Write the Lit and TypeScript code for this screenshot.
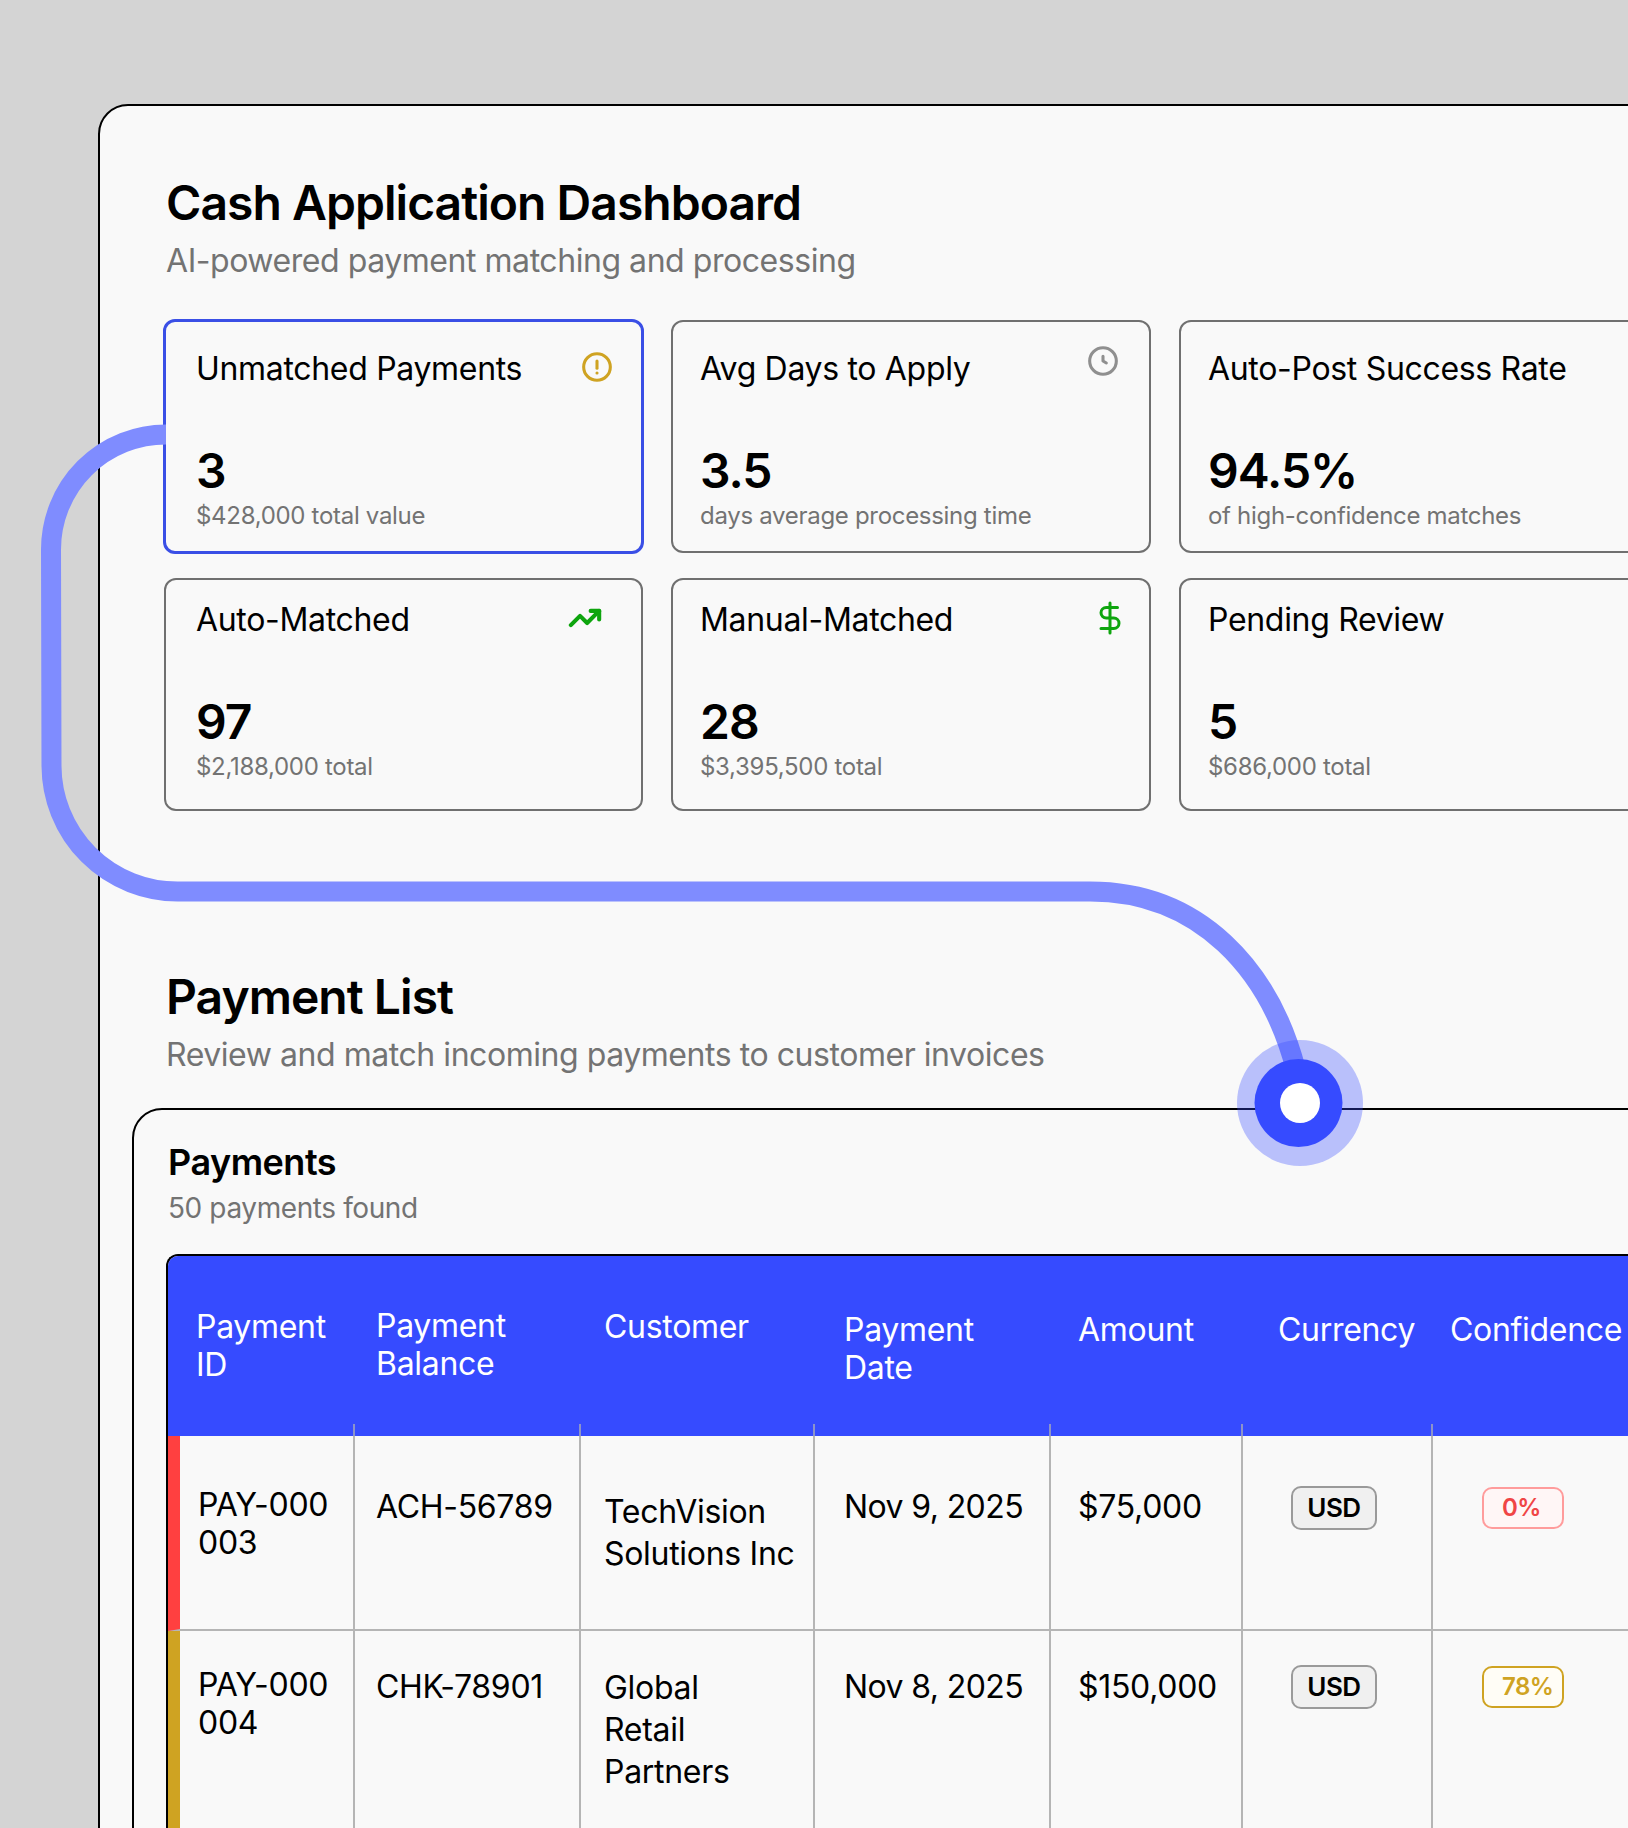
import { LitElement, html, css, svg } from "lit";
import { customElement } from "lit/decorators.js";

const icons = {
  alert: svg`<circle cx="12" cy="12" r="10"/><path d="M12 7.5v5.5"/><path d="M12 16.5h.01"/>`,
  clock: svg`<circle cx="12" cy="12" r="10"/><path d="M12 8.5V12l2.5 1.5"/>`,
  trend: svg`<path d="M22 7l-8.5 8.5-5-5L2 17"/><path d="M16 7h6v6"/>`,
  dollar: svg`<path d="M12 2v20"/><path d="M17 5H9.5a3.5 3.5 0 0 0 0 7h5a3.5 3.5 0 0 1 0 7H6"/>`,
};

type Card = { title: string; value: string; sub: string; icon?: keyof typeof icons; cls: string };

const cards: Card[] = [
  { title: "Unmatched Payments", value: "3", sub: "$428,000 total value", icon: "alert", cls: "top first active" },
  { title: "Avg Days to Apply", value: "3.5", sub: "days average processing time", icon: "clock", cls: "top" },
  { title: "Auto-Post Success Rate", value: "94.5%", sub: "of high-confidence matches", cls: "top" },
  { title: "Auto-Matched", value: "97", sub: "$2,188,000 total", icon: "trend", cls: "first" },
  { title: "Manual-Matched", value: "28", sub: "$3,395,500 total", icon: "dollar", cls: "" },
  { title: "Pending Review", value: "5", sub: "$686,000 total", cls: "" },
];

const headers: [string[], string][] = [
  [["Payment", "ID"], "h-a c1"],
  [["Payment", "Balance"], "h-b c2"],
  [["Customer"], "h-a c3"],
  [["Payment", "Date"], "h-c c4"],
  [["Amount"], "h-c c5"],
  [["Currency"], "h-c c6"],
  [["Confidence"], "h-c c7"],
];

const rows = [
  { bar: "red", id: ["PAY-000", "003"], bal: "ACH-56789", cust: ["TechVision", "Solutions Inc"], date: "Nov 9, 2025", amt: "$75,000", conf: "0%", confCls: "bad" },
  { bar: "gold", id: ["PAY-000", "004"], bal: "CHK-78901", cust: ["Global", "Retail", "Partners"], date: "Nov 8, 2025", amt: "$150,000", conf: "78%", confCls: "mid" },
];

@customElement("app-root")
export class AppRoot extends LitElement {
  static styles = css`
    :host { display: block; height: 1828px; overflow: hidden; position: relative; background: #d4d4d4; font-family: Inter, "Noto Sans", sans-serif; color: #000; }
    * { box-sizing: border-box; }
    .panel { margin: 104px 0 0 98px; width: 1700px; height: 1900px; background: #f9f9f9; border: 2px solid #000; border-radius: 30px; padding: 68px 0 0 66px; }
    h1, h2 { margin: 0; font-size: 48px; line-height: 58px; font-weight: 600; letter-spacing: -0.96px; }
    .lead { margin: 9px 0 0; font-size: 32px; line-height: 40px; color: #737373; letter-spacing: -0.45px; }
    .cards { display: grid; grid-template-columns: 478px 480px 480px; column-gap: 28px; row-gap: 25px; grid-template-rows: 233px 233px; margin: 39px 0 0 -1px; width: 1600px; }
    .card { border: 2px solid #707070; border-radius: 12px; padding: 21px 0 0 27px; display: flex; flex-direction: column; }
    .card.first { padding-left: 30px; margin-left: -1px; }
    .card.top { padding-top: 28px; }
    .card.active { border: 3px solid #3a4fe6; margin: -1px -1px -1px -2px; padding-top: 28px; padding-left: 30px; }
    .head { display: flex; justify-content: space-between; align-items: flex-start; height: 38px; }
    .title { font-size: 32px; line-height: 38px; font-weight: 400; white-space: nowrap; letter-spacing: -0.32px; }
    .icon { fill: none; stroke-linecap: round; stroke-linejoin: round; stroke-width: 2.3; flex: none; }
    .i-alert { width: 32px; height: 32px; stroke: #cfa322; margin: 1px 28px 0 0; }
    .i-clock { width: 32px; height: 32px; stroke: #8f8f8f; margin: -5px 30px 0 0; }
    .i-trend { width: 34px; height: 34px; stroke: #0ea50e; margin: 0 39px 0 0; stroke-width: 2.9; }
    .i-dollar { width: 36px; height: 36px; stroke: #0ea50e; margin: -1px 21px 0 0; stroke-width: 2; }
    .value { font-size: 48px; line-height: 58px; font-weight: 600; margin-top: 54px; letter-spacing: -1px; }
    .sub { font-size: 24px; line-height: 30px; color: #737373; white-space: nowrap; letter-spacing: -0.3px; margin-top: 1px; }
    .list { margin-top: 157px; }
    .payments { margin: 33px 0 0 -34px; border: 2px solid #000; border-radius: 30px; width: 1560px; height: 800px; padding: 30px 0 0 33px; }
    .p-title { font-size: 36px; line-height: 44px; font-weight: 600; letter-spacing: -0.5px; margin-left: 1px; }
    .p-sub { font-size: 28px; line-height: 34px; color: #737373; margin: 7px 0 0 1px; letter-spacing: -0.4px; }
    .table { margin: 29px 0 0 -1px; border: 2px solid #000; border-right: 0; border-bottom: 0; border-radius: 12px 0 0 0; overflow: hidden; display: grid; grid-template-columns: 187px 226px 234px 236px 192px 190px 300px; grid-template-rows: 180px 195px 400px; width: 1526px; }
    .th { background: #364bff; color: #fff; font-size: 32px; line-height: 38px; font-weight: 400; position: relative; letter-spacing: -0.3px; }
    .th:not(:last-child)::after { content: ""; position: absolute; right: 0; bottom: 0; width: 2px; height: 12px; background: #8c93c9; }
    .h-a { padding-top: 52px; }
    .h-b { padding-top: 51px; }
    .h-c { padding-top: 55px; }
    .c1 { padding-left: 28px; }
    .c2 { padding-left: 21px; }
    .c3 { padding-left: 23px; }
    .c4 { padding-left: 29px; }
    .c5 { padding-left: 27px; }
    .c6 { padding-left: 35px; }
    .c7 { padding-left: 17px; }
    .td { border-right: 2px solid #b5b5b5; border-bottom: 2px solid #b5b5b5; font-size: 32px; line-height: 38px; letter-spacing: -0.3px; }
    .id { padding: 50px 0 0 18px; border-left: 12px solid; }
    .red { border-left-color: #ff4040; }
    .gold { border-left-color: #cfa322; }
    .id.gold { padding-top: 35px; }
    .line { display: block; white-space: nowrap; }
    .plain { padding-top: 52px; }
    .plain.second { padding-top: 37px; }
    .date { letter-spacing: -0.6px; }
    .cust { line-height: 42px; padding-top: 55px; }
    .cust.second { padding-top: 36px; }
    .cell-badge { padding-top: 50px; display: flex; align-items: flex-start; }
    .cell-badge.second { padding-top: 34px; }
    .usd { padding-left: 48px; }
    .cnf { padding-left: 49px; }
    .badge { display: flex; align-items: center; height: 44px; border-radius: 10px; font-weight: 600; }
    .cur { width: 86px; justify-content: center; background: #f0f0f0; border: 2px solid #9a9a9a; font-size: 26px; letter-spacing: -0.5px; }
    .conf { width: 82px; height: 42px; margin-top: 1px; padding-left: 18px; border: 2px solid; font-size: 24px; letter-spacing: -0.5px; }
    .bad { background: #fff6f6; border-color: #ff9c9c; color: #f04545; }
    .mid { background: #fffdf6; border-color: #cfa322; color: #cfa322; }
    .link { position: absolute; left: 0; top: 0; width: 1628px; height: 1828px; pointer-events: none; }
  `;

  private icon(name: keyof typeof icons) {
    return html`<svg class="icon i-${name}" viewBox="0 0 24 24">${icons[name]}</svg>`;
  }

  render() {
    return html`
      <div class="panel">
        <h1>Cash Application Dashboard</h1>
        <p class="lead">AI-powered payment matching and processing</p>
        <div class="cards">
          ${cards.map(
            (c) => html`<div class="card ${c.cls}">
              <div class="head"><span class="title">${c.title}</span>${c.icon ? this.icon(c.icon) : ""}</div>
              <div class="value">${c.value}</div>
              <div class="sub">${c.sub}</div>
            </div>`
          )}
        </div>
        <div class="list">
          <h2>Payment List</h2>
          <p class="lead">Review and match incoming payments to customer invoices</p>
        </div>
        <div class="payments">
          <div class="p-title">Payments</div>
          <div class="p-sub">50 payments found</div>
          <div class="table">
            ${headers.map(([parts, c]) => html`<div class="th ${c}">${parts.map((p) => html`<span class="line">${p}</span>`)}</div>`)}
            ${rows.map((r, i) => {
              const s = i ? "second" : "";
              return html`
                <div class="td id ${r.bar}">${r.id.map((l) => html`<span class="line">${l}</span>`)}</div>
                <div class="td plain c2 ${s}">${r.bal}</div>
                <div class="td cust c3 ${s}">${r.cust.map((l) => html`<span class="line">${l}</span>`)}</div>
                <div class="td plain date c4 ${s}">${r.date}</div>
                <div class="td plain c5 ${s}">${r.amt}</div>
                <div class="td cell-badge usd ${s}"><span class="badge cur">USD</span></div>
                <div class="td cell-badge cnf ${s}"><span class="badge conf ${r.confCls}">${r.conf}</span></div>
              `;
            })}
          </div>
        </div>
      </div>
      <svg class="link" viewBox="0 0 1628 1828">
        <path d="M166 434.5A115 115 0 0 0 51 549.5L51.5 766A126 126 0 0 0 177.5 891.5H1090C1200 891.5 1270 970 1296 1070" fill="none" stroke="#7f8cff" stroke-width="20"/>
        <circle cx="1300" cy="1103" r="63" fill="#364bff" fill-opacity="0.33"/>
        <circle cx="1298.5" cy="1103" r="44" fill="#364bff"/>
        <circle cx="1300" cy="1103" r="20" fill="#fff"/>
      </svg>
    `;
  }
}
